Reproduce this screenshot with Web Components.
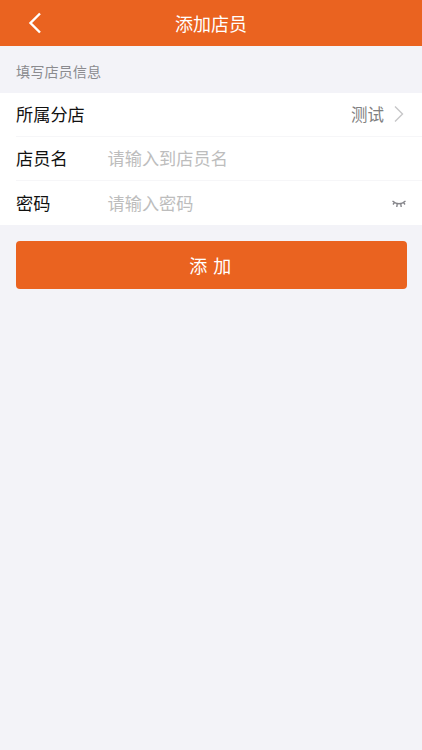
<!DOCTYPE html>
<html lang="zh">
<head>
<meta charset="utf-8">
<title>添加店员</title>
<style>
    html, body { margin: 0; padding: 0; height: 100%; background: #f3f3f8; }
    body { font-family: "Noto Sans CJK SC", "Liberation Sans", sans-serif; }
</style>
</head>
<body>
<add-staff-page></add-staff-page>
<script>
class NavBar extends HTMLElement {
    constructor() {
        super();
        this.shadowroot = this.attachShadow({mode: 'open'});
        this.shadowroot.innerHTML = `
            <style>
                :host {
                    display: flex;
                    align-items: center;
                    justify-content: center;
                    position: relative;
                    height: 46px;
                    background: #ea6320;
                    color: #fff;
                    font-size: 18px;
                }
                svg { position: absolute; left: 27px; top: 12px; }
            </style>
            <svg width="16" height="22" viewBox="0 0 16 22" fill="none" stroke="#fff" stroke-width="2.4">
                <path d="M13 1.5 L3.5 11 L13 20.5"/>
            </svg>
            <span><slot></slot></span>
        `;
    }
}

class FormRow extends HTMLElement {
    constructor() {
        super();
        this.shadowroot = this.attachShadow({mode: 'open'});
        this.shadowroot.innerHTML = `
            <style>
                :host {
                    display: flex;
                    align-items: center;
                    height: 44px;
                    margin-left: 16px;
                    padding: 0 16px 2px 0;
                    box-sizing: border-box;
                    font-size: 17.2px;
                    color: #111;
                    border-bottom: 1px solid #f6f6f8;
                }
                :host([last]) { border-bottom: 0; }
                .label { width: 91.5px; flex-shrink: 0; }
                .value { flex: 1; color: #bdbdbd; white-space: nowrap; }
                .end { display: flex; align-items: center; color: #808080; font-size: 16.5px; }
            </style>
            <div class="label"><slot name="label"></slot></div>
            <div class="value"><slot name="value"></slot></div>
            <div class="end"><slot name="end"></slot></div>
        `;
    }
}

class AddButton extends HTMLElement {
    constructor() {
        super();
        this.shadowroot = this.attachShadow({mode: 'open'});
        this.shadowroot.innerHTML = `
            <style>
                :host {
                    display: flex;
                    align-items: center;
                    justify-content: center;
                    height: 48px;
                    margin: 16px 15.5px 0 16px;
                    padding-left: 4px;
                    border-radius: 4px;
                    background: #ea6320;
                    color: #fff;
                    font-size: 18px;
                    letter-spacing: 6px;
                }
            </style>
            <slot></slot>
        `;
    }
}

class AddStaffPage extends HTMLElement {
    constructor() {
        super();
        this.shadowroot = this.attachShadow({mode: 'open'});
        this.shadowroot.innerHTML = `
            <style>
                :host { display: block; min-height: 750px; background: #f3f3f8; }
                .section {
                    display: flex;
                    align-items: center;
                    height: 47px;
                    padding: 2px 0 0 16px;
                    box-sizing: border-box;
                    font-size: 14.2px;
                    color: #8b8b8f;
                }
                .card { background: #fff; }
                .test { margin-right: 9px; }
                .up { margin-top: -3px; }
            </style>
            <nav-bar>添加店员</nav-bar>
            <div class="section">填写店员信息</div>
            <div class="card">
                <form-row>
                    <span slot="label" class="up">所属分店</span>
                    <span slot="end" class="test">测试</span>
                    <svg slot="end" width="12" height="18" viewBox="0 0 12 18" fill="none" stroke="#c6c6c8" stroke-width="1.4" style="margin-right:1px">
                        <path d="M2 1.5 L9.5 9 L2 16.5"/>
                    </svg>
                </form-row>
                <form-row>
                    <span slot="label">店员名</span>
                    <span slot="value">请输入到店员名</span>
                </form-row>
                <form-row last>
                    <span slot="label">密码</span>
                    <span slot="value">请输入密码</span>
                    <svg slot="end" width="14" height="10" viewBox="0 0 14 10" fill="none" stroke="#85858a" stroke-width="1.4" style="margin-top:4px">
                        <path d="M0.5 2 Q7 7.5 13.5 2"/>
                        <path d="M2.5 3.5 L1 5.5 M5.2 5 L4.8 8 M8.8 5 L9.2 8 M11.5 3.5 L13 5.5"/>
                    </svg>
                </form-row>
            </div>
            <add-button>添加</add-button>
        `;
    }
}

customElements.define('nav-bar', NavBar);
customElements.define('form-row', FormRow);
customElements.define('add-button', AddButton);
customElements.define('add-staff-page', AddStaffPage);
</script>
</body>
</html>
